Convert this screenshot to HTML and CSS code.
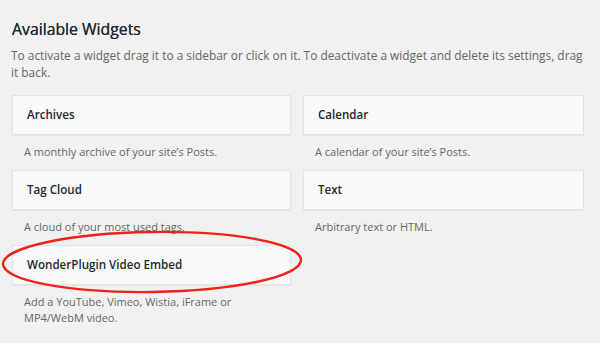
FILE: index.html
```html
<!DOCTYPE html>
<html>
<head>
<meta charset="utf-8">
<link rel="stylesheet" href="styles.css">
</head>
<body>
<div class="wrap">
  <h2 class="title">Available Widgets</h2>
  <p class="intro">To activate a widget drag it to a sidebar or click on it. To deactivate a widget and delete its settings, drag it back.</p>
  <div class="grid">
    <div class="widget">
      <div class="card">Archives</div>
      <div class="desc">A monthly archive of your site’s Posts.</div>
    </div>
    <div class="widget">
      <div class="card">Calendar</div>
      <div class="desc">A calendar of your site’s Posts.</div>
    </div>
    <div class="widget">
      <div class="card">Tag Cloud</div>
      <div class="desc">A cloud of your most used tags.</div>
    </div>
    <div class="widget">
      <div class="card">Text</div>
      <div class="desc">Arbitrary text or HTML.</div>
    </div>
    <div class="widget highlight">
      <div class="card">WonderPlugin Video Embed</div>
      <div class="desc">Add a YouTube, Vimeo, Wistia, iFrame or MP4/WebM video.</div>
      <svg class="circle" width="312" height="80" viewBox="0 0 312 80">
        <ellipse cx="152" cy="37" rx="149" ry="30" transform="rotate(-0.8 152 37)" fill="none" stroke="#ee2219" stroke-width="2.4"/>
      </svg>
    </div>
  </div>
</div>
</body>
</html>
```

FILE: styles.css
```css
html, body {
  margin: 0;
  padding: 0;
}
body {
  background: #f1f1f1;
  font-family: "Open Sans", "Noto Sans", sans-serif;
  color: #444;
  width: 600px;
  height: 343px;
  overflow: hidden;
}
.wrap {
  padding: 0 14px 0 12px;
}
.title {
  margin: 0;
  padding-top: 18px;
  font-size: 15.8px;
  font-weight: 400;
  line-height: 22px;
  color: #23282d;
  text-shadow: 0 0 0.3px #23282d;
}
.intro {
  margin: 7px 0 0 -1px;
  font-size: 11.9px;
  line-height: 17px;
  color: #666;
}
.grid {
  margin-top: 14px;
  display: grid;
  grid-template-columns: 279px 281px;
  column-gap: 12px;
}
.widget {
  position: relative;
  height: 75px;
}
.card {
  height: 38px;
  background: #fafafa;
  border: 1px solid #e3e3e3;
  box-shadow: 0 1px 1px rgba(0,0,0,0.04);
  box-sizing: content-box;
  padding: 0 14px;
  font-size: 11.6px;
  font-weight: 600;
  line-height: 38px;
  color: #23282d;
}
.desc {
  padding: 9px 12px 0 12px;
  max-width: 212px;
  font-size: 11px;
  line-height: 16px;
  color: #666;
}
.circle {
  position: absolute;
  left: -12px;
  top: -20px;
}
```
